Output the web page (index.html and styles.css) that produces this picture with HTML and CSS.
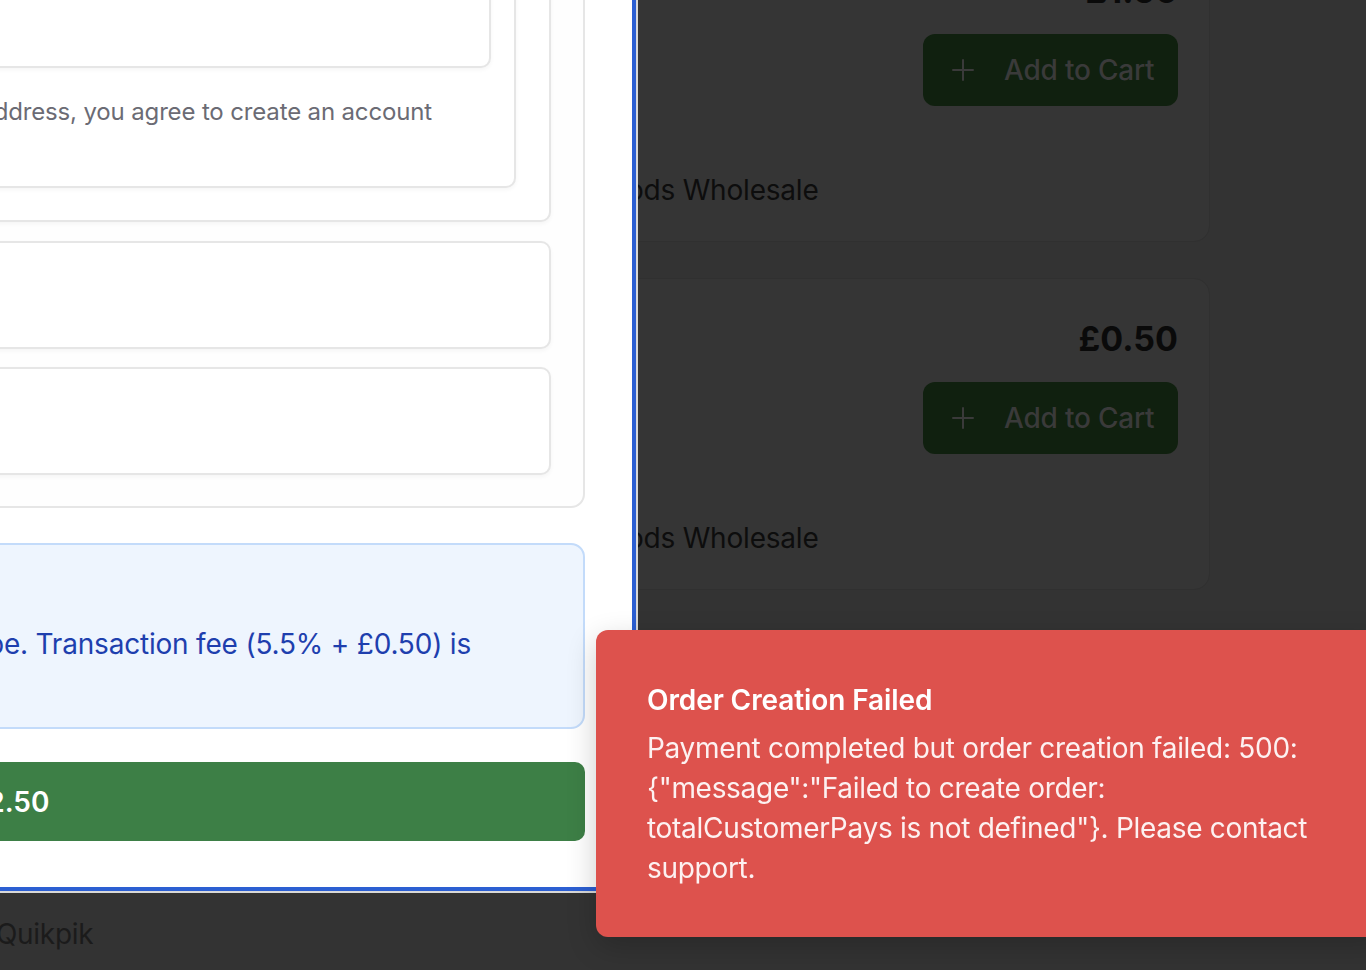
FILE: index.html
```html
<!DOCTYPE html>
<html lang="en">
<head>
<meta charset="utf-8">
<title>Checkout</title>
<link rel="stylesheet" href="styles.css">
</head>
<body>
<div class="page">
  <main class="products">
    <article class="product">
      <div class="thumb"></div>
      <div class="product-body">
        <div class="product-top">
          <div class="product-info">
            <h3 class="product-name">Eggs</h3>
          </div>
          <div class="buy">
            <div class="price">£1.50</div>
            <button class="add" type="button">
              <svg class="plus" width="22" height="22" viewBox="0 0 22 22" aria-hidden="true"><path d="M11 1v20M1 11h20" stroke="currentColor" stroke-width="2" fill="none" stroke-linecap="round"/></svg>
              <span>Add to Cart</span>
            </button>
          </div>
        </div>
        <p class="supplier">Fresh Foods Wholesale</p>
      </div>
    </article>
    <article class="product">
      <div class="thumb"></div>
      <div class="product-body">
        <div class="product-top">
          <div class="product-info">
            <h3 class="product-name">Milk</h3>
          </div>
          <div class="buy">
            <div class="price">£0.50</div>
            <button class="add" type="button">
              <svg class="plus" width="22" height="22" viewBox="0 0 22 22" aria-hidden="true"><path d="M11 1v20M1 11h20" stroke="currentColor" stroke-width="2" fill="none" stroke-linecap="round"/></svg>
              <span>Add to Cart</span>
            </button>
          </div>
        </div>
        <p class="supplier">Fresh Foods Wholesale</p>
      </div>
    </article>
  </main>
  <footer class="footer"><span class="brand">Quikpik</span></footer>
</div>

<div class="dialog" role="dialog">
  <section class="summary-card">
    <div class="group-card">
      <div class="email-card">
        <div class="field-box"></div>
        <p class="hint">By providing your email address, you agree to create an account</p>
      </div>
    </div>
    <div class="option-card"></div>
    <div class="option-card"></div>
  </section>
  <div class="info-box">
    <p class="info-title">Secure payment</p>
    <p class="info-line">Payments are processed by Stripe. Transaction fee (5.5% + £0.50) is</p>
    <p class="info-short">added to the total.</p>
  </div>
  <button class="pay" type="button">Pay £2.50</button>
</div>

<div class="toast" role="alert">
  <div class="toast-title">Order Creation Failed</div>
  <div class="toast-desc">Payment completed but order creation failed: 500: {"message":"Failed to create order: totalCustomerPays is not defined"}. Please contact support.</div>
</div>
</body>
</html>
```

FILE: styles.css
```css
* { box-sizing: border-box; }

html, body {
  margin: 0;
  padding: 0;
  height: 100%;
  overflow: hidden;
}

body {
  background: #333333;
  font-family: Inter, "Noto Sans", "Liberation Sans", sans-serif;
  color: #111;
}

p, h3 { margin: 0; }

/* ---------- underlying page (dimmed) ---------- */
.page {
  height: 970px;
  display: flex;
  flex-direction: column;
}

.products {
  margin: -70px 0 0 156px;
  width: 1054px;
  display: flex;
  flex-direction: column;
  gap: 36px;
}

.product {
  height: 312px;
  background: #353535;
  border: 1px solid #303030;
  border-radius: 16px;
  padding: 36px 31px 31px 32px;
  display: flex;
  gap: 32px;
}

.thumb {
  width: 294px;
  flex: none;
  border-radius: 12px;
  background: #2f2f2f;
}

.product-body {
  flex: 1;
  display: flex;
  flex-direction: column;
}

.product-top {
  display: flex;
  justify-content: space-between;
}

.product-name {
  font-size: 32px;
  line-height: 48px;
  font-weight: 600;
  color: #0b0b0b;
}

.buy {
  display: flex;
  flex-direction: column;
  align-items: flex-end;
}

.price {
  font-size: 34px;
  line-height: 48px;
  font-weight: 700;
  color: #0a0a0a;
}

.add {
  margin-top: 19px;
  height: 72px;
  width: 255px;
  border: 0;
  border-radius: 12px;
  background: #10200f;
  color: #3a3a3a;
  font-family: inherit;
  font-size: 28px;
  font-weight: 500;
  letter-spacing: -0.2px;
  display: flex;
  align-items: center;
  gap: 30px;
  padding: 0 0 0 29px;
}

.plus { flex: none; }

.supplier {
  margin-top: auto;
  font-size: 28px;
  line-height: 40px;
  color: #0d0d0d;
  letter-spacing: -0.2px;
}

.footer {
  margin-top: auto;
  padding-bottom: 16px;
  font-size: 28px;
  line-height: 40px;
  color: #1b1b1b;
}

.brand {
  margin-left: -4px;
  letter-spacing: -0.3px;
}

/* ---------- dialog ---------- */
.dialog {
  position: fixed;
  left: -665px;
  bottom: 79px;
  width: 1301px;
  height: 1500px;
  background: #ffffff;
  border-right: 4px solid #2c5fd2;
  border-bottom: 4px solid #2c5fd2;
  outline: 2px solid #d8d8d8;
  padding: 0 47px 46px 48px;
  display: flex;
  flex-direction: column;
  justify-content: flex-end;
  overflow: hidden;
}

.summary-card {
  border: 2px solid #e6e6e6;
  border-radius: 14px;
  padding: 0 32px 31px 32px;
  display: flex;
  flex-direction: column;
  gap: 18px;
  background: #fefefe;
}

.group-card {
  border: 2px solid #e6e6e6;
  border-radius: 10px;
  padding: 0 33px 32px 32px;
  background: #fff;
  box-shadow: 0 2px 4px rgba(0, 0, 0, 0.04);
  margin-bottom: 1px;
}

.email-card {
  border: 2px solid #e6e6e6;
  border-radius: 10px;
  padding: 0 23px 0 24px;
  background: #fff;
  box-shadow: 0 2px 4px rgba(0, 0, 0, 0.04);
}

.field-box {
  height: 500px;
  border: 2px solid #e6e6e6;
  border-radius: 10px;
  background: #fff;
  box-shadow: 0 2px 4px rgba(0, 0, 0, 0.04);
}

.hint {
  margin: 28px 0 58px;
  font-size: 24px;
  line-height: 32px;
  color: #6b6b74;
  white-space: nowrap;
  text-align: right;
  padding-right: 59px;
  letter-spacing: -0.15px;
}

.option-card {
  height: 108px;
  border: 2px solid #e6e6e6;
  border-radius: 10px;
  background: #fff;
  box-shadow: 0 2px 4px rgba(0, 0, 0, 0.04);
}

.info-box {
  margin-top: 35px;
  height: 186px;
  border: 2px solid #c3dbfa;
  border-radius: 14px;
  background: #eef5fe;
  padding: 32px 32px 23px;
  color: #1e3fae;
  font-size: 28px;
  line-height: 40px;
}

.info-title {
  font-weight: 600;
  margin-bottom: 7px;
}

.info-line {
  white-space: nowrap;
  text-align: right;
  padding-right: 80px;
  letter-spacing: -0.2px;
}

.pay {
  margin-top: 33px;
  height: 79px;
  flex: none;
  border: 0;
  border-radius: 10px;
  background: #3d7f46;
  color: #ffffff;
  font-family: inherit;
  font-size: 28px;
  font-weight: 600;
  display: flex;
  align-items: center;
  justify-content: center;
  padding-right: 12px;
}

/* ---------- toast ---------- */
.toast {
  position: fixed;
  left: 596px;
  top: 630px;
  width: 790px;
  background: #dd524d;
  border-radius: 12px;
  padding: 50px 61px 49px 51px;
  box-shadow: 0 10px 30px rgba(0, 0, 0, 0.2);
  color: #fff;
  font-size: 28px;
  line-height: 40px;
}

.toast-title {
  font-weight: 600;
  letter-spacing: -0.1px;
}

.toast-desc {
  margin-top: 8px;
  color: rgba(255, 255, 255, 0.92);
  letter-spacing: -0.3px;
}
```
